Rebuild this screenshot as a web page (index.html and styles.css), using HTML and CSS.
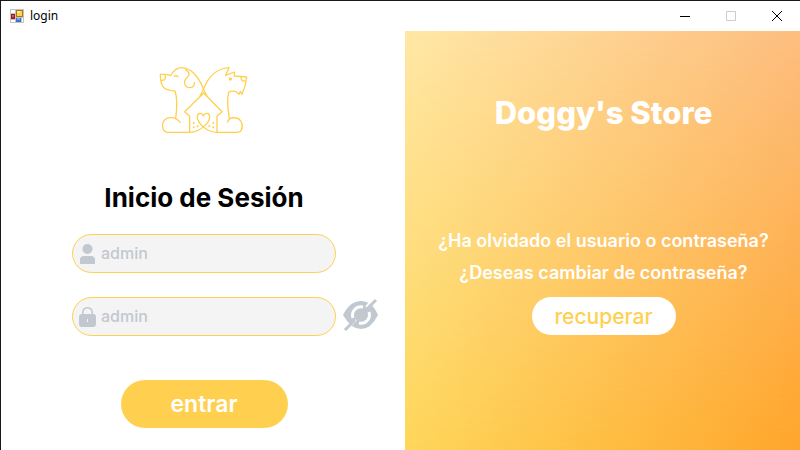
FILE: index.html
```html
<!DOCTYPE html>
<html lang="es">
<head>
<meta charset="utf-8">
<title>login</title>
<link rel="stylesheet" href="styles.css">
</head>
<body>
<div class="window">
  <header class="titlebar">
    <svg class="app-icon" viewBox="0 0 14 14" aria-hidden="true">
      <path fill="#c3c3c3" d="M0 0h14v14H0z"/>
      <path fill="#fff" d="M1 1h4v3H1zM1 11h4v2H1zM12 9h1v4h-1z"/>
      <path fill="#a87a14" d="M6 1h7v7H6z"/>
      <path fill="#ffd34a" d="M7 2h5v5H7z"/>
      <path fill="#ffe99a" d="M7 2h3v2H7z"/>
      <path fill="#a51c1c" d="M1 5h4v5H1z"/>
      <path fill="#d5584c" d="M2 6h2v2H2z"/>
      <path fill="#3f72c4" d="M6 9h5v4H6z"/>
      <path fill="#79a9ee" d="M7 9h3v2H7z"/>
    </svg>
    <span class="titlebar-text">login</span>
    <div class="window-controls">
      <button class="control" type="button" aria-label="Minimizar"><svg viewBox="0 0 10 10"><path d="M0 5.500h10"/></svg></button>
      <button class="control" type="button" aria-label="Maximizar" disabled><svg viewBox="0 0 10 10"><path d="M.5.5h9v9h-9z"/></svg></button>
      <button class="control" type="button" aria-label="Cerrar"><svg viewBox="0 0 10 10"><path d="M0 0l10 10M10 0L0 10"/></svg></button>
    </div>
  </header>
  <main class="content">
    <form class="login">
      <svg class="logo" viewBox="0 0 330 270" aria-hidden="true">
        <path d="M65 62C74 46 84 38 97 38C128 38 151 70 163 101L174 124"/>
        <path d="M65 62L51 58H34C34 82 38 101 60 105C67 108 74 108 78 108C87 133 84 161 80 190"/>
        <path d="M35 76C49 78 52 68 48 59M75 65Q82 59 88 66"/>
        <path d="M108 44C125 52 122 62 113 69C102 79 106 98 122 98C133 98 137 91 136 81"/>
        <path d="M95 203C78 182 52 184 42 202C37 218 45 232 55 232H122C142 232 158 222 170 209"/>
        <path d="M153 124L164 101C174 76 197 40 240 38L230 61L256 51V63L293 66C291 87 287 101 279 118L274 109L270 118L263 111C250 106 244 108 239 112C232 135 237 162 241 190"/>
        <path d="M276 66C276 77 283 80 290 77"/>
        <path d="M122 232V184L107 170L164 114L219 170L204 184V232"/>
        <path d="M235 203C238 190 250 187 262 189C277 192 284 212 277 225C274 231 269 232 264 232H205C170 232 145 202 145 185C145 173 159 172 163 183C168 172 182 173 182 185C182 194 178 201 170 209"/>
        <g class="dots"><circle cx="244" cy="72" r="5"/><circle cx="134" cy="204" r="3"/><circle cx="134" cy="217" r="3"/><circle cx="146" cy="214" r="3"/><circle cx="181" cy="214" r="3"/><circle cx="193" cy="204" r="3"/><circle cx="193" cy="217" r="3"/></g>
      </svg>
      <h1 class="heading">Inicio de Sesión</h1>
      <div class="row">
        <label class="field">
          <svg class="field-icon" viewBox="0 0 17 20" role="img" aria-label="Usuario"><circle cx="8.500" cy="5" r="5"/><path d="M1 20v-4q0-4 4-4h7q4 0 4 4v4z"/></svg>
          <input class="field-input" type="text" name="usuario" placeholder="admin">
        </label>
      </div>
      <div class="row">
        <label class="field">
          <svg class="field-icon" viewBox="0 0 17 20" role="img" aria-label="Contraseña"><path fill-rule="evenodd" d="M3 7V6q0-6 5.500-6T14 6v1q3 0 3 3v7q0 3-3 3H3q-3 0-3-3v-7q0-3 3-3zm1.500 0h8V6q0-4.500-4-4.500T4.500 6zM8 12v3h1v-3z"/></svg>
          <input class="field-input" type="text" name="clave" placeholder="admin">
        </label>
        <button class="reveal" type="button" aria-label="Mostrar contraseña">
          <svg viewBox="0 0 36 32">
            <path d="M0 16Q7 2 18 2T35 16Q28 30 18 30T0 16z"/>
            <path class="iris-ring" d="M10 19A8.500 8.500 0 0 1 20 8M26 13A8.500 8.500 0 0 1 16 24"/>
            <path class="slash-gap" d="M23 8L30 0M6 28L13 21"/>
            <path class="slash" d="M2 31L12 21M24 10L33 1"/>
          </svg>
        </button>
      </div>
      <button class="submit" type="submit">entrar</button>
    </form>
    <aside class="promo">
      <h2 class="brand">Doggy's Store</h2>
      <p class="question">¿Ha olvidado el usuario o contraseña?</p>
      <p class="question">¿Deseas cambiar de contraseña?</p>
      <button class="recover" type="button">recuperar</button>
    </aside>
  </main>
</div>
</body>
</html>
```
FILE: styles.css
```css
* {
  box-sizing: border-box;
}

body {
  margin: 0;
  font-family: Inter, "Liberation Sans", sans-serif;
}

button,
input {
  margin: 0;
  padding: 0;
  border: 0;
  background: none;
  font-family: inherit;
}

h1,
h2,
p {
  margin: 0;
}

.window {
  display: flex;
  flex-direction: column;
  min-height: 100vh;
  border-top: 1px solid #181818;
  border-left: 1px solid #181818;
  background: #fff;
}

.titlebar {
  display: flex;
  align-items: center;
  height: 30px;
  padding-left: 9px;
}

.app-icon {
  width: 14px;
  height: 14px;
}

.titlebar-text {
  margin-left: 6px;
  font: 12px/16px "Noto Sans", "Open Sans", sans-serif;
}

.window-controls {
  display: flex;
  align-self: stretch;
  margin-left: auto;
}

.control {
  display: flex;
  align-items: center;
  justify-content: center;
  width: 46px;
}

.control svg {
  width: 10px;
  height: 10px;
  overflow: visible;
  fill: none;
  stroke: #000;
}

.control:disabled svg {
  stroke: #ccc;
}

.content {
  display: grid;
  flex: 1;
  grid-template-columns: 404fr 395fr;
}

.login {
  display: flex;
  flex-direction: column;
  align-items: center;
  padding: 24px 0 0 2px;
}

.logo {
  width: 110px;
  height: 90px;
  fill: none;
  stroke: #ffd050;
  stroke-width: 4;
  stroke-linejoin: round;
}

.dots {
  fill: #ffd050;
  stroke: none;
}

.heading {
  margin: 35px 0 18px;
  font-size: 26px;
  font-weight: 700;
  line-height: 36px;
}

.row {
  display: grid;
  grid-template-columns: 1fr 264px 1fr;
  align-items: center;
  width: 100%;
  margin-bottom: 24px;
}

.field {
  display: flex;
  grid-column: 2;
  align-items: center;
  height: 39px;
  padding: 0 16px 0 6px;
  border: 1px solid #ffd050;
  border-radius: 20px;
  background: #f4f4f4;
}

.field-icon {
  width: 17px;
  height: 20px;
  fill: #c1c8d0;
}

.field-input {
  flex: 1;
  min-width: 0;
  margin-left: 5px;
  padding-bottom: 2px;
  font-size: 16px;
  font-weight: 500;
  outline: 0;
}

.field-input::placeholder {
  color: #c1c8d0;
}

.reveal {
  width: 36px;
  height: 32px;
  margin: 0 0 4px 7px;
}

.reveal svg {
  display: block;
  width: 36px;
  height: 32px;
  overflow: visible;
  fill: #c1c8d0;
}

.reveal .iris-ring {
  fill: none;
  stroke: #fff;
  stroke-width: 3;
}

.reveal .slash-gap {
  fill: none;
  stroke: #fff;
  stroke-width: 2;
}

.reveal .slash {
  fill: none;
  stroke: #c1c8d0;
  stroke-width: 3;
}

.submit {
  width: 167px;
  height: 48px;
  margin-top: 20px;
  border-radius: 24px;
  background: #ffd050;
  color: #fff;
  font-size: 23px;
  font-weight: 600;
}

.promo {
  position: relative;
  z-index: 0;
  display: flex;
  flex-direction: column;
  align-items: center;
  padding: 62px 0 0 2px;
  background: linear-gradient(90deg, #ffe8a6, #fdbe80);
  color: #fff;
}

.promo::before {
  content: "";
  position: absolute;
  z-index: -1;
  inset: 0;
  background: linear-gradient(90deg, #fed65a, #ffa52a);
  mask-image: linear-gradient(transparent, #000);
}

.brand {
  margin-bottom: 92px;
  font-size: 31px;
  font-weight: 800;
  line-height: 40px;
}

.question {
  font-size: 18px;
  font-weight: 600;
  line-height: 32px;
}

.recover {
  width: 144px;
  height: 38px;
  margin-top: 8px;
  border-radius: 19px;
  background: #fff;
  color: #ffd050;
  font-size: 21px;
  font-weight: 500;
}
```
